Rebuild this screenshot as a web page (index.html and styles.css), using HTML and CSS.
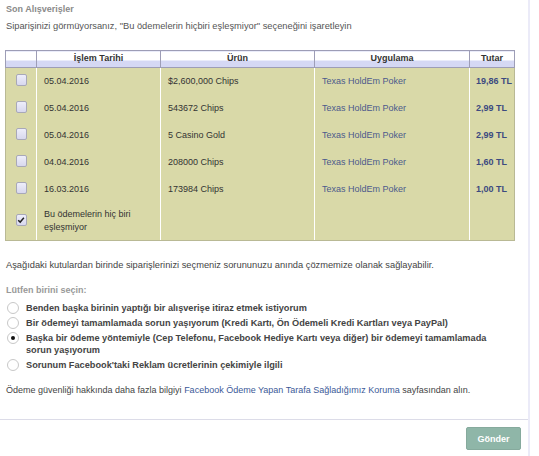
FILE: index.html
```html
<!DOCTYPE html>
<html lang="tr">
<head>
<meta charset="utf-8">
<link rel="stylesheet" href="styles.css">
</head>
<body>
<div class="page">
  <div class="content">
    <h2 class="title">Son Alışverişler</h2>
    <p class="subtitle">Siparişinizi görmüyorsanız, "Bu ödemelerin hiçbiri eşleşmiyor" seçeneğini işaretleyin</p>

    <table class="orders">
      <thead>
        <tr>
          <th class="c-cb"></th>
          <th class="c-date">İşlem Tarihi</th>
          <th class="c-prod">Ürün</th>
          <th class="c-app">Uygulama</th>
          <th class="c-amt">Tutar</th>
        </tr>
      </thead>
      <tbody>
        <tr>
          <td class="c-cb"><span class="cb"></span></td>
          <td>05.04.2016</td>
          <td>$2,600,000 Chips</td>
          <td class="app">Texas HoldEm Poker</td>
          <td class="amt">19,86 TL</td>
        </tr>
        <tr>
          <td class="c-cb"><span class="cb"></span></td>
          <td>05.04.2016</td>
          <td>543672 Chips</td>
          <td class="app">Texas HoldEm Poker</td>
          <td class="amt">2,99 TL</td>
        </tr>
        <tr>
          <td class="c-cb"><span class="cb"></span></td>
          <td>05.04.2016</td>
          <td>5 Casino Gold</td>
          <td class="app">Texas HoldEm Poker</td>
          <td class="amt">2,99 TL</td>
        </tr>
        <tr>
          <td class="c-cb"><span class="cb"></span></td>
          <td>04.04.2016</td>
          <td>208000 Chips</td>
          <td class="app">Texas HoldEm Poker</td>
          <td class="amt">1,60 TL</td>
        </tr>
        <tr>
          <td class="c-cb"><span class="cb"></span></td>
          <td>16.03.2016</td>
          <td>173984 Chips</td>
          <td class="app">Texas HoldEm Poker</td>
          <td class="amt">1,00 TL</td>
        </tr>
        <tr class="last">
          <td class="c-cb"><span class="cb checked"><svg viewBox="0 0 10 10" width="8" height="8"><path d="M1.5 5.2 L4 7.6 L8.6 2.2" fill="none" stroke="#222" stroke-width="1.8"/></svg></span></td>
          <td class="none">Bu ödemelerin hiç biri eşleşmiyor</td>
          <td></td>
          <td></td>
          <td></td>
        </tr>
      </tbody>
    </table>

    <p class="info">Aşağıdaki kutulardan birinde siparişlerinizi seçmeniz sorununuzu anında çözmemize olanak sağlayabilir.</p>

    <p class="choose">Lütfen birini seçin:</p>
    <ul class="options">
      <li><span class="radio"></span><span class="opt">Benden başka birinin yaptığı bir alışverişe itiraz etmek istiyorum</span></li>
      <li><span class="radio"></span><span class="opt">Bir ödemeyi tamamlamada sorun yaşıyorum (Kredi Kartı, Ön Ödemeli Kredi Kartları veya PayPal)</span></li>
      <li><span class="radio on"></span><span class="opt">Başka bir ödeme yöntemiyle (Cep Telefonu, Facebook Hediye Kartı veya diğer) bir ödemeyi tamamlamada sorun yaşıyorum</span></li>
      <li><span class="radio"></span><span class="opt">Sorunum Facebook'taki Reklam ücretlerinin çekimiyle ilgili</span></li>
    </ul>

    <p class="footnote">Ödeme güvenliği hakkında daha fazla bilgiyi <a href="#">Facebook Ödeme Yapan Tarafa Sağladığımız Koruma</a> sayfasından alın.</p>
  </div>
  <div class="actions">
    <button class="send">Gönder</button>
  </div>
</div>
</body>
</html>
```

FILE: styles.css
```css
html, body {
  margin: 0;
  padding: 0;
  background: #fff;
}
body {
  font-family: "Liberation Sans", Arial, sans-serif;
  font-size: 9px;
  color: #444;
}
.page {
  width: 528px;
  height: 456px;
  border-right: 2px solid #ebebf8;
  box-sizing: content-box;
}
.content {
  padding: 4px 0 0 6px;
  height: 420px;
  box-sizing: border-box;
  border-bottom: 1px solid #dcdce8;
}
.title {
  margin: 0;
  font-size: 9px;
  font-weight: bold;
  color: #8a8a8a;
  line-height: 11px;
}
.subtitle {
  margin: 6px 0 0;
  font-size: 9.3px;
  line-height: 11px;
  color: #555;
}
.orders {
  margin: 18px 0 0 -1px;
  width: 510px;
  border-collapse: collapse;
  table-layout: fixed;
}
.orders th {
  height: 14px;
  padding: 2px 0 0;
  border: 1px solid #9d9db6;
  background: linear-gradient(to bottom, #fff 0, #fff 9px, #d5d8f4 9px, #d5d8f4 100%);
  font-weight: bold;
  color: #333;
  text-align: center;
  line-height: 10px;
  vertical-align: top;
}
.orders .c-cb { width: 30px; }
.orders .c-date { width: 123px; }
.orders .c-prod { width: 153px; }
.orders .c-app { width: 154px; }
.orders tbody {
  background: #d9d9a8;
}
.orders td {
  height: 27px;
  padding: 0 0 0 7px;
  box-sizing: border-box;
  border-left: 1px solid #fff;
  border-right: 1px solid #fff;
  color: #333;
  line-height: 11px;
  vertical-align: middle;
}
.orders tbody tr td:first-child {
  border-left: 1px solid #b9b995;
  padding: 0;
  text-align: center;
}
.orders tbody tr td:last-child {
  border-right: 1px solid #b9b995;
  padding-left: 6px;
}
.orders tr.last td {
  height: 38px;
  border-bottom: 1px solid #b9b995;
}
.orders td.none {
  line-height: 13px;
  padding-right: 18px;
}
.orders .app {
  color: #4c5a8c;
}
.orders .amt {
  color: #3c4a80;
  font-weight: bold;
}
.cb {
  display: inline-block;
  width: 9px;
  height: 10px;
  border: 1px solid #a8a8b8;
  border-radius: 2px;
  background: linear-gradient(#eeeefa, #d8d8ee);
  vertical-align: middle;
  position: relative;
  top: -1px;
}
.cb.checked {
  display: inline-flex;
  align-items: center;
  justify-content: center;
}
.info {
  margin: 19px 0 0;
  font-size: 9.3px;
  line-height: 11px;
  color: #444;
}
.choose {
  margin: 14px 0 0;
  font-weight: bold;
  color: #999;
  line-height: 11px;
}
.options {
  list-style: none;
  margin: 6px 0 0;
  padding: 0;
}
.options li {
  display: flex;
  align-items: flex-start;
  margin-top: 3px;
}
.options li:first-child {
  margin-top: 4px;
}
.radio {
  flex: none;
  width: 10px;
  height: 10px;
  border: 1px solid #c8c8c8;
  border-radius: 50%;
  background: #fff;
  margin: 0 7px 0 1px;
  position: relative;
}
.radio.on::after {
  content: "";
  position: absolute;
  left: 3px;
  top: 3px;
  width: 4px;
  height: 4px;
  border-radius: 50%;
  background: #111;
}
.opt {
  font-weight: bold;
  font-size: 9.2px;
  color: #444;
  line-height: 12px;
  width: 475px;
}
.footnote {
  margin: 14px 0 0;
  line-height: 11px;
  color: #444;
}
.footnote a {
  color: #3b5998;
  text-decoration: none;
}
.actions {
  display: flex;
  justify-content: flex-end;
  padding: 7px 7px 0 0;
}
.send {
  width: 55px;
  height: 23px;
  border: 1px solid #86aa9d;
  border-radius: 2px;
  background: #8fb6a8;
  color: #fff;
  font-family: "Liberation Sans", Arial, sans-serif;
  font-size: 9px;
  font-weight: bold;
  padding: 0;
}
```
